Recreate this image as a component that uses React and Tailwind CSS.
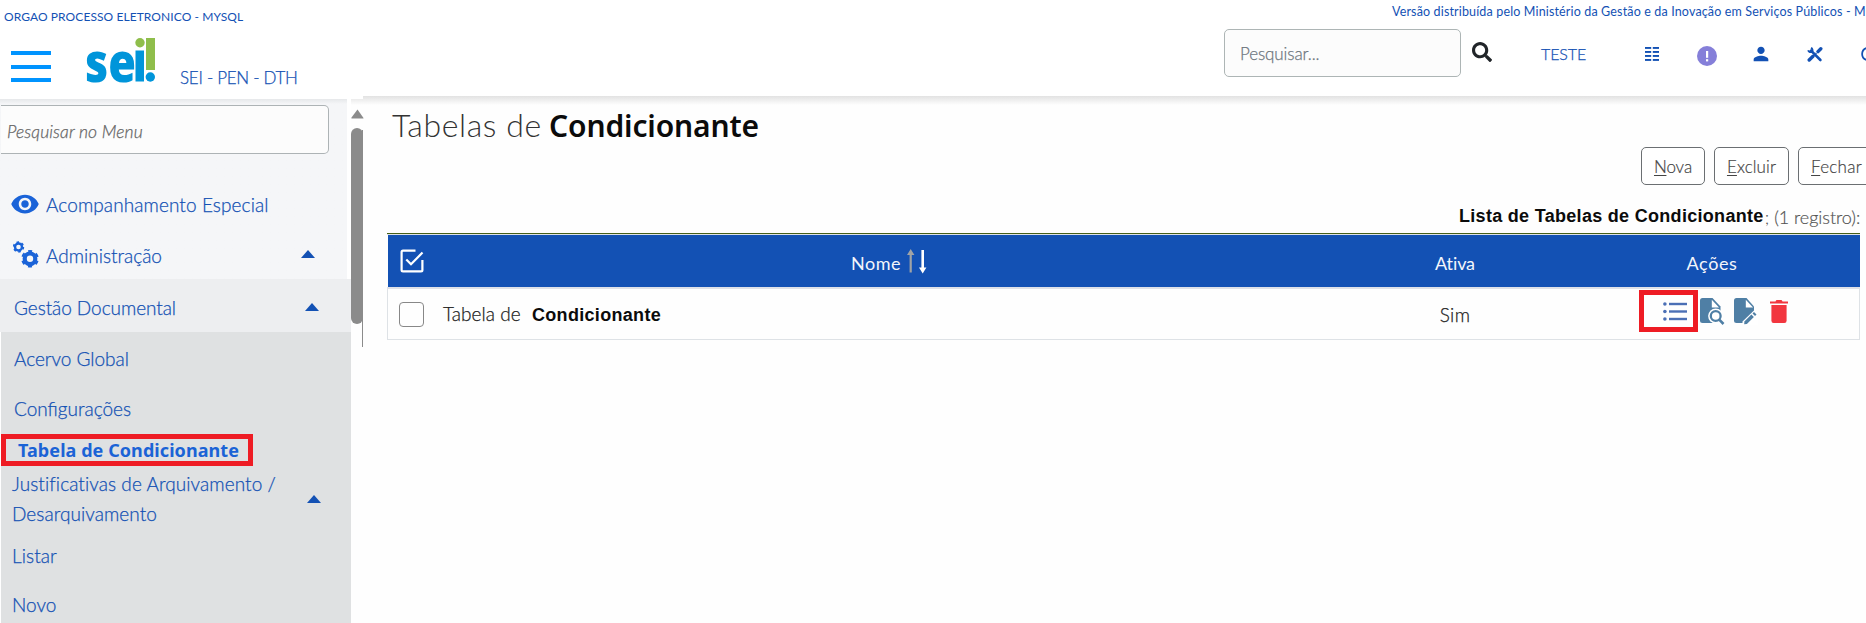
import React from "react";
import { FaSearch } from "react-icons/fa";
import { MdVisibility, MdPerson } from "react-icons/md";

function Logo() {
  return (
    <svg width="70" height="47" viewBox="0 0 70 47" className="block overflow-visible">
      <text
        x="-1"
        y="43.6"
        textLength="51"
        lengthAdjust="spacingAndGlyphs"
        fontFamily="'Open Sans', sans-serif"
        fontWeight="800"
        fontSize="55"
        fill="#0095da"
      >
        se
      </text>
      <rect x="49.5" y="12.5" width="8.5" height="31" fill="#0095da" />
      <circle cx="54" cy="4.8" r="4.7" fill="#8fbe4b" />
      <rect x="60" y="0" width="9" height="32" fill="#8fbe4b" />
      <circle cx="64.3" cy="39" r="4.7" fill="#0095da" />
    </svg>
  );
}

function ControlsIcon() {
  return (
    <svg width="14" height="14" viewBox="0 0 14 14" fill="#1351b4" className="block shrink-0">
      {[0, 4, 8, 12].map((y) => (
        <g key={y}>
          <rect x="0" y={y} width="6.2" height="1.9" />
          <rect x="7.8" y={y} width="6.2" height="1.9" />
        </g>
      ))}
    </svg>
  );
}

function ToolsIcon() {
  return (
    <svg width="16" height="15" viewBox="0 0 16 15" fill="none" stroke="#1351b4" className="block">
      <path d="M4 3.6 L13.4 13" strokeWidth="2.6" strokeLinecap="round" />
      <path d="M1.2 3.2 A2.6 2.6 0 0 0 5.2 4.6 A2.6 2.6 0 0 0 4 1" strokeWidth="2" />
      <path d="M11 4.6 L13.8 1.8" strokeWidth="3.4" strokeLinecap="round" />
      <path d="M9.4 6 L8.6 6.8" strokeWidth="1.6" />
      <path d="M6 9.2 L2.2 13" strokeWidth="3.4" strokeLinecap="round" />
    </svg>
  );
}

function AlertIcon() {
  return (
    <svg width="20" height="20" viewBox="0 0 20 20" className="block">
      <circle cx="10" cy="10" r="10" fill="#857fd9" />
      <rect x="9" y="5" width="2.2" height="6.8" fill="#fff" />
      <rect x="9" y="13.2" width="2.2" height="2.2" fill="#fff" />
    </svg>
  );
}

function Caret({ className }) {
  return (
    <svg width="14" height="8" viewBox="0 0 14 8" className={className}>
      <path d="M0 8 L7 0 L14 8 Z" fill="#1351b4" />
    </svg>
  );
}

function SelectAllIcon() {
  return (
    <svg width="24" height="24" viewBox="0 0 24 24" fill="none" stroke="#fff" strokeWidth="2.2" className="block">
      <path d="M15.5 1.6 H3 Q1.6 1.6 1.6 3 V21 Q1.6 22.4 3 22.4 H21 Q22.4 22.4 22.4 21 V11" />
      <path d="M6.3 10.5 L11 15.2 L22.5 3.6" />
    </svg>
  );
}

function SortArrows() {
  return (
    <svg width="20" height="25" viewBox="0 0 20 25" className="block">
      <path d="M3.7 0 L7.4 6 H4.8 V23.5 H2.6 V6 H0 Z" fill="#a0a3a6" />
      <path d="M14.4 1 H17 V18.5 H19.4 L15.7 24.5 L12 18.5 H14.4 Z" fill="#fff" />
    </svg>
  );
}

function ListIcon() {
  return (
    <svg width="24" height="19" viewBox="0 0 24 19" fill="#4b6fb5" className="block">
      {[2, 9.5, 17].map((y) => (
        <g key={y}>
          <circle cx="1.9" cy={y} r="1.8" />
          <rect x="6" y={y - 1.2} width="18" height="2.4" />
        </g>
      ))}
    </svg>
  );
}

function DocSearchIcon() {
  return (
    <svg width="25" height="27" viewBox="0 0 25 27" className="block">
      <path d="M2.5 0 H12.5 L20.5 8.5 V25 H2.5 Q0 25 0 22.5 V2.5 Q0 0 2.5 0 Z" fill="#4f7fa5" />
      <path d="M11.8 1.8 V9.5 H19 Z" fill="#fff" />
      <circle cx="15.7" cy="18" r="7.6" fill="#fff" />
      <path d="M19 20 L26 27 H14 Z" fill="#fff" />
      <circle cx="15.7" cy="18" r="4.9" fill="none" stroke="#4f7fa5" strokeWidth="2.3" />
      <path d="M19 21.3 L23.5 26" stroke="#4f7fa5" strokeWidth="2.6" />
    </svg>
  );
}

function DocEditIcon() {
  return (
    <svg width="24" height="27" viewBox="0 0 24 27" className="block">
      <path d="M2.5 0 H12.5 L20 8.5 V25 H2.5 Q0 25 0 22.5 V2.5 Q0 0 2.5 0 Z" fill="#4f7fa5" />
      <path d="M11.8 1.8 V9.5 H19 Z" fill="#fff" />
      <path d="M21 11.5 L24 14.5 V27 H8.5 V23.5 Z" fill="#fff" />
      <path d="M10.4 23.6 L17.4 16.6 L19.9 19.1 L12.9 26.1 L10.2 26.3 Z" fill="#4f7fa5" />
      <path d="M18.5 15.5 L20 14 L22.5 16.5 L21 18 Z" fill="#4f7fa5" />
    </svg>
  );
}

function Header() {
  return (
    <header className="flex h-24 shrink-0 text-[#1351b4]">
      <div className="flex w-[362px] shrink-0 flex-col pl-1">
        <div className="mt-2 h-[18px] text-[12px] leading-[18px] tracking-[0.08px]">
          ORGAO PROCESSO ELETRONICO - MYSQL
        </div>
        <div className="flex">
          <div className="ml-[7px] mt-[25px] flex w-10 flex-col gap-[9.5px]">
            <span className="h-1 bg-[#0094ff]" />
            <span className="h-1 bg-[#0094ff]" />
            <span className="h-1 bg-[#0094ff]" />
          </div>
          <div className="ml-[35px] mt-3">
            <Logo />
          </div>
          <div className="ml-[24px] mt-[40px] text-[17px] font-light leading-6 tracking-[-0.28px] [-webkit-text-stroke:0.25px]">
            SEI - PEN - DTH
          </div>
        </div>
      </div>
      <div className="flex min-w-0 flex-1 flex-col">
        <div className="ml-[1030px] mt-[3px] h-[18px] whitespace-nowrap text-[12.5px] leading-[18px] tracking-[0.15px]">
          Versão distribuída pelo Ministério da Gestão e da Inovação em Serviços Públicos - MG
        </div>
        <div className="ml-[862px] mt-2 flex h-12 items-center">
          <div className="flex h-12 w-[237px] shrink-0 items-center rounded-[5px] border border-[#adb5b5] bg-[#fcfcfc] px-[15px] pt-0.5 text-[17px] font-light tracking-[-0.1px] text-[#6c757d] [-webkit-text-stroke:0.25px]">
            Pesquisar...
          </div>
          <FaSearch className="mb-0.5 ml-[11px] size-5 shrink-0 text-[#212529]" />
          <div className="ml-[49px] w-[104px] shrink-0 pt-[2px] text-[16px] font-light tracking-[-0.1px] [-webkit-text-stroke:0.25px]">
            TESTE
          </div>
          <div className="mt-[2px] shrink-0">
            <ControlsIcon />
          </div>
          <div className="ml-[38px] mt-[5px] shrink-0">
            <AlertIcon />
          </div>
          <MdPerson className="ml-[33px] mt-0.5 size-[22px] shrink-0" />
          <div className="ml-[35px] mt-0.5 shrink-0">
            <ToolsIcon />
          </div>
          <svg width="7" height="14" viewBox="0 0 7 14" className="ml-[38px] mt-0.5 shrink-0">
            <path d="M5.5 1 A6.3 6.3 0 0 0 5.5 13" fill="none" stroke="#1351b4" strokeWidth="1.8" />
          </svg>
        </div>
      </div>
    </header>
  );
}

function Sidebar() {
  return (
    <nav className="flex w-[351px] shrink-0 flex-col text-[19px] font-light text-[#1351b4] [-webkit-text-stroke:0.25px]">
      <div className="h-[3px] shrink-0 bg-white" />
      <div className="mr-1 flex h-[180px] shrink-0 flex-col bg-linear-to-b from-[#e6e8ea] to-[#f5f6f8] to-[5px]">
        <div className="mt-1.5 ml-px flex h-[49px] w-[328px] shrink-0 items-center rounded-r-[5px] border border-l-0 border-[#adb3b5] bg-[#fcfcfc] pl-1.5 pt-[5px] text-[17.5px] italic tracking-[0.1px] text-[#666]">
          Pesquisar no Menu
        </div>
        <div className="mt-[25px] flex h-[50px] shrink-0 items-center pl-[10px]">
          <MdVisibility className="size-[30px] text-[#1a63d8]" />
          <span className="ml-[6px] mt-0.5 tracking-[0.1px]">Acompanhamento Especial</span>
        </div>
        <div className="flex h-[50px] shrink-0 items-center pl-[13px]">
          <svg width="26" height="27" viewBox="0 0 26 27" className="block">
            <g fill="none" stroke="#1a63d8">
              <circle cx="5.5" cy="6" r="3.5" strokeWidth="2.4" />
              <circle cx="5.5" cy="6" r="4.9" strokeWidth="1.6" strokeDasharray="2.5 2.63" />
              <circle cx="17" cy="17.8" r="5.3" strokeWidth="4.2" />
              <circle cx="17" cy="17.8" r="7.8" strokeWidth="2" strokeDasharray="4 4.17" strokeDashoffset="-2" />
            </g>
          </svg>
          <span className="ml-[7px] mt-1">Administração</span>
          <Caret className="ml-auto mr-[32px]" />
        </div>
      </div>
      <div className="flex h-[53px] shrink-0 items-center bg-[#edeef0] pl-3.5 pr-[32px] pt-[2px]">
        <span className="mt-1 tracking-[-0.06px]">Gestão Documental</span>
        <Caret className="ml-auto" />
      </div>
      <div className="ml-px flex flex-1 flex-col bg-[#dfe1e2]">
        <div className="mt-[2px] flex h-[50px] shrink-0 items-center pl-[13px] tracking-[-0.02px]">Acervo Global</div>
        <div className="flex h-[50px] shrink-0 items-center pl-[13px]">Configurações</div>
        <div className="flex h-8 w-[252px] shrink-0 items-center border-5 border-[#ee1c24] pl-3 font-['Noto_Sans'] text-[18px] font-bold leading-5 tracking-[0.07px] text-[#1b63d6] [-webkit-text-stroke:0px]">
          Tabela de Condicionante
        </div>
        <div className="mt-[3px] flex h-[60px] shrink-0 items-center pl-[11px] pr-[30px] leading-[30px]">
          <span className="whitespace-nowrap">
            <span className="block tracking-[0.08px]">Justificativas de Arquivamento /</span>
            <span className="block tracking-[0.06px]">Desarquivamento</span>
          </span>
          <Caret className="ml-auto" />
        </div>
        <div className="flex h-[51px] shrink-0 items-center pl-[11px] pt-[3px] tracking-[0.1px]">Listar</div>
        <div className="flex h-[48px] shrink-0 items-center pl-[11px] pt-[3px]">Novo</div>
      </div>
    </nav>
  );
}

function Scrollbar() {
  return (
    <div className="flex w-4 shrink-0">
      <div className="flex w-[12px] flex-col items-center">
        <div className="h-[3px] w-full shrink-0 bg-white" />
        <svg width="13" height="10" viewBox="0 0 13 10" className="mt-[10px] shrink-0">
          <path d="M6.5 0.5 L12.5 9 Q12.5 9.5 12 9.5 H0.8 Q0 9.5 0.5 8.5 Z" fill="#8b8b8b" />
        </svg>
        <div className="mt-[9px] h-[196px] w-3 shrink-0 rounded-full bg-[#8b8b8b]" />
      </div>
      <div className="-ml-px mt-[34px] h-[217px] w-px bg-[#8b8b8b]" />
    </div>
  );
}

function ActionButton({ hotkey, label, className }) {
  return (
    <button
      className={`h-[38px] shrink-0 whitespace-nowrap rounded-[5px] border border-[#6b6f72] bg-white text-[17px] font-light text-[#444] [-webkit-text-stroke:0.2px] ${className}`}
    >
      <u className="underline-offset-2">{hotkey}</u>
      {label}
    </button>
  );
}

function Main() {
  return (
    <main className="flex min-w-0 flex-1 flex-col pl-5">
      <h1 className="mt-[10px] flex h-[38px] items-center pl-[5px] text-[32px] font-light text-[#333]">
        <span className="w-[157px] shrink-0 tracking-[0.62px]">Tabelas de</span>
        <span className="font-['Noto_Sans'] text-[30px] font-semibold tracking-[-0.13px] text-[#0b0b0b]">
          Condicionante
        </span>
      </h1>
      <div className="mt-[3px] flex gap-[9px] pl-[1254px]">
        <ActionButton hotkey="N" label="ova" className="w-16 pt-0.5 tracking-[-0.1px]" />
        <ActionButton hotkey="E" label="xcluir" className="w-[75px] pt-0.5 tracking-[0.1px]" />
        <ActionButton hotkey="F" label="echar" className="w-[77px] pt-0.5 tracking-[0.25px]" />
      </div>
      <div className="mt-[15px] flex h-[33px] pl-[1072px] text-[18px] font-light leading-[33px] text-[#555]">
        <span className="shrink-0 font-['Liberation_Sans'] font-bold tracking-[0.3px] text-[#0b0b0b]">
          Lista de Tabelas de Condicionante
        </span>
        <span className="ml-px mt-px">;</span>
        <span className="ml-[5px] mt-px whitespace-nowrap tracking-[-0.04px] [-webkit-text-stroke:0.2px]">
          (1 registro):
        </span>
      </div>
      <section className="w-[1473px]">
        <div className="h-px bg-[#465f18]" />
        <div className="h-px bg-[#dee2e6]" />
        <div className="ml-px grid h-[52px] grid-cols-[50px_908px_218px_296px] items-center bg-[#1351b4] text-[18px] text-[#f3f6fb]">
          <div className="pl-3">
            <SelectAllIcon />
          </div>
          <div className="flex items-center justify-center pr-[10px]">
            <span className="ml-[4px] mr-[6px] mt-1 tracking-[0.5px]">Nome</span>
            <SortArrows />
          </div>
          <div className="pt-1 text-center tracking-[-0.1px]">Ativa</div>
          <div className="pt-1 text-center tracking-[0.62px]">Ações</div>
        </div>
        <div className="h-0.5 bg-[#dfe1e8]" />
        <div className="grid h-[51px] grid-cols-[50px_908px_218px_295px] items-center border border-t-0 border-[#dee2e6] text-[19px] text-[#222]">
          <div className="pl-[11px]">
            <div className="size-[25px] rounded-[4px] border border-[#888]" />
          </div>
          <div className="flex items-center pl-[5px] pt-px font-light">
            <span className="w-[89px] tracking-[0.06px] [-webkit-text-stroke:0.25px]">Tabela de</span>
            <span className="mt-0.5 font-['Liberation_Sans'] text-[18px] font-bold tracking-[0.31px] text-[#0b0b0b]">
              Condicionante
            </span>
          </div>
          <div className="pt-0.5 text-center font-light tracking-[0.4px] [-webkit-text-stroke:0.25px]">Sim</div>
          <div className="flex h-[50px] items-start pl-[75px]">
            <div className="mt-px flex h-[42px] w-[59px] items-start border-5 border-[#ee1c24] pl-[19px] pt-[7px]">
              <ListIcon />
            </div>
            <div className="ml-0.5 mt-[9px]">
              <DocSearchIcon />
            </div>
            <div className="ml-[9px] mt-[9px]">
              <DocEditIcon />
            </div>
            <svg width="18" height="23" viewBox="0 0 18 23" fill="#f2363f" className="ml-3 mt-[11px] block">
              <path d="M0 1.4 H5.5 Q6 0 7 0 H11 Q12 0 12.5 1.4 H18 V3.6 H0 Z" />
              <path d="M1.4 5 H16.6 V20.8 Q16.6 23 14.4 23 H3.6 Q1.4 23 1.4 20.8 Z" />
            </svg>
          </div>
        </div>
      </section>
    </main>
  );
}

export default function App() {
  return (
    <div className="flex h-[623px] w-[1866px] flex-col overflow-hidden bg-white font-['Lato',sans-serif]">
      <Header />
      <div className="flex min-h-0 flex-1">
        <Sidebar />
        <div className="flex min-w-0 flex-1 bg-linear-to-b from-[#e2e2e2] to-[#fefefe] to-[9px]">
          <Scrollbar />
          <Main />
        </div>
      </div>
    </div>
  );
}
